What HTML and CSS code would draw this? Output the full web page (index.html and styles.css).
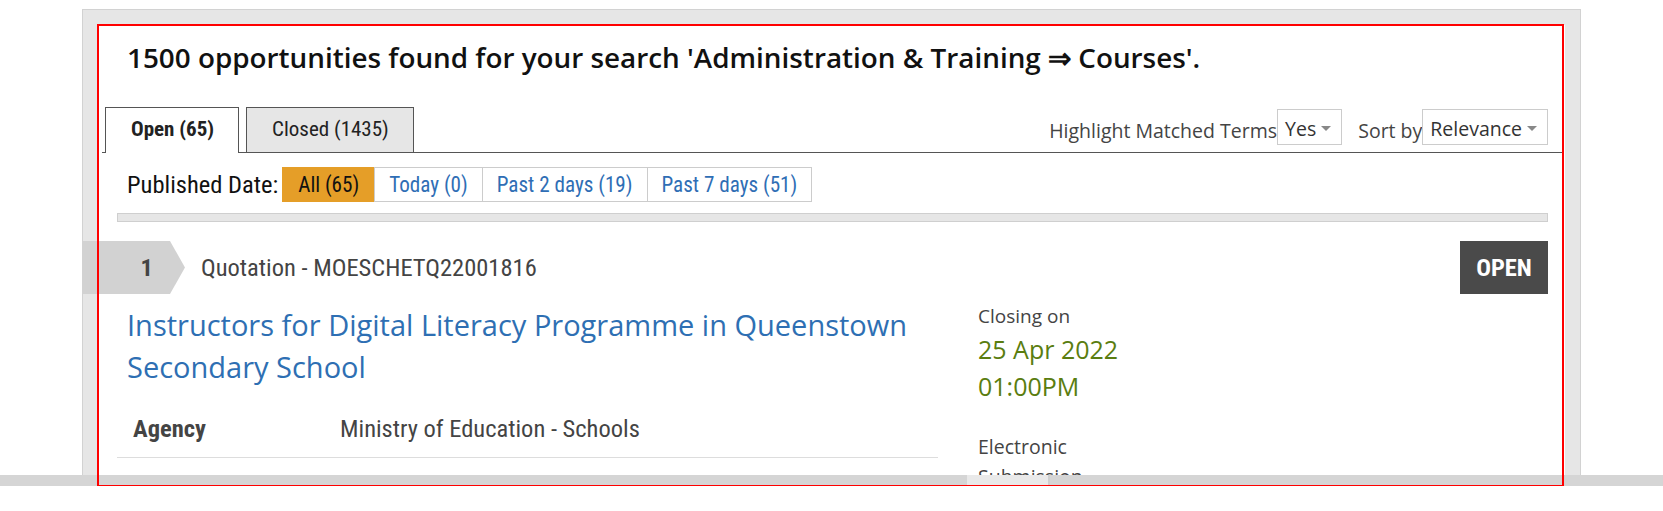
FILE: index.html
```html
<!DOCTYPE html>
<html lang="en">
<head>
<meta charset="utf-8">
<title>Opportunities</title>
<link rel="stylesheet" href="styles.css">
</head>
<body>
<div class="viewport">
  <div class="panel">
    <div class="results">
      <h1 class="summary">1500 opportunities found for your search 'Administration &amp; Training ⇒ Courses'.</h1>
      <div class="tabbar">
        <div class="tabs">
          <a class="tab active">Open (65)</a>
          <a class="tab">Closed (1435)</a>
        </div>
        <div class="controls">
          <span class="ctl-label">Highlight Matched Terms</span>
          <span class="select">Yes<i class="caret"></i></span>
          <span class="ctl-label sort">Sort by</span>
          <span class="select">Relevance<i class="caret"></i></span>
        </div>
      </div>
      <div class="inner">
        <div class="filters">
          <span class="filter-label">Published Date:</span>
          <span class="pill active">All (65)</span>
          <span class="pill">Today (0)</span>
          <span class="pill">Past 2 days (19)</span>
          <span class="pill">Past 7 days (51)</span>
        </div>
        <div class="divider"></div>
        <div class="item">
          <div class="item-head">
            <span class="num">1</span>
            <span class="ref">Quotation - MOESCHETQ22001816</span>
            <span class="status">OPEN</span>
          </div>
          <div class="item-body">
            <div class="main">
              <a class="title">Instructors for Digital Literacy Programme in Queenstown Secondary School</a>
              <table class="meta">
                <tr><th>Agency</th><td>Ministry of Education - Schools</td></tr>
              </table>
            </div>
            <div class="side">
              <div class="label">Closing on</div>
              <div class="date">25 Apr 2022</div>
              <div class="date">01:00PM</div>
              <div class="label gap">Electronic Submission</div>
            </div>
          </div>
        </div>
      </div>
    </div>
    <div class="highlight"></div>
  </div>
  <div class="hscroll"><div class="thumb"></div></div>
</div>
</body>
</html>
```
FILE: styles.css
```css
* { box-sizing: border-box; }
html, body { margin: 0; padding: 0; background: #fff; }
body { font-family: "Open Sans", "Noto Sans", sans-serif; color: #333; }

.viewport { position: relative; height: 486px; overflow: hidden; }

.panel {
  position: relative;
  width: 1499px;
  margin: 9px auto 0;
  border: 1px solid #d2d2d2;
  background: #e6e6e6;
  padding: 15px 15px 0;
  min-height: 600px;
}

.results { background: #fff; padding-top: 12px; min-height: 600px; }

.summary {
  margin: 0 0 0 29px;
  font-size: 27.85px;
  line-height: 40px;
  font-weight: 600;
  color: #111;
}

.tabbar {
  display: flex;
  justify-content: space-between;
  align-items: flex-start;
  margin: 28px 2px 0 4px;
  border-bottom: 1px solid #555;
  height: 48px;
}
.tabs { display: flex; gap: 7px; align-self: flex-end; margin-left: 3px; }
.tab {
  display: flex;
  align-items: center;
  height: 45px;
  padding: 0 24px 2px 25px;
  border: 1px solid #555;
  border-bottom: 0;
  background: #e6e6e6;
  font-family: "Roboto Condensed", "Liberation Sans Narrow", "DejaVu Sans Condensed", Roboto, sans-serif;
  font-size: 21px;
  color: #222;
  margin-bottom: -1px;
}
.tab.active { background: #fff; font-weight: 700; height: 46px; padding-bottom: 3px; }

.controls { display: flex; align-items: center; margin: 4px 15px 0 0; }
.ctl-label { font-size: 19.5px; color: #444; padding-top: 6px; }
.ctl-label.sort { margin-left: 16px; }
.select {
  display: flex;
  align-items: center;
  height: 36px;
  border: 1px solid #ccc;
  padding: 2px 10px 0 7px;
  font-size: 19.5px;
  color: #333;
}
.caret {
  display: inline-block;
  margin-left: 5px;
  border-left: 5px solid transparent;
  border-right: 5px solid transparent;
  border-top: 5px solid #888;
}

.inner { padding: 0 17px 0 19px; }

.filters {
  display: flex;
  align-items: center;
  margin-top: 14px;
  padding-left: 10px;
  font-family: "Roboto Condensed", "Liberation Sans Narrow", "DejaVu Sans Condensed", Roboto, sans-serif;
  font-size: 21.15px;
}
.filter-label { color: #111; margin-right: 5px; font-size: 24.5px; }
.pill {
  display: flex;
  align-items: center;
  height: 35px;
  padding: 0 14px;
  border: 1px solid #ccc;
  margin-left: -1px;
  color: #2f6eb5;
}
.pill.active { background: #e59e28; border-color: #e59e28; color: #111; padding: 0 15px; }

.divider {
  margin-top: 11px;
  height: 9px;
  border: 1px solid #cfcfcf;
  background: #e6e6e6;
}

.item-head {
  display: flex;
  align-items: center;
  margin-top: 19px;
  height: 53px;
  font-family: "Roboto Condensed", "Liberation Sans Narrow", "DejaVu Sans Condensed", Roboto, sans-serif;
}
.num {
  display: flex;
  align-items: center;
  justify-content: flex-end;
  width: 102px;
  height: 53px;
  margin-left: -34px;
  padding-right: 32px;
  background: #d2d2d2;
  clip-path: polygon(0 0, 87px 0, 102px 50%, 87px 100%, 0 100%);
  font-size: 24.5px;
  font-weight: 700;
  color: #444;
}
.ref { margin-left: 16px; font-size: 24.5px; color: #444; }
.status {
  margin-left: auto;
  display: flex;
  align-items: center;
  justify-content: center;
  width: 88px;
  height: 53px;
  background: #4a4a4a;
  color: #fff;
  font-size: 24.5px;
  font-weight: 700;
}

.item-body { display: grid; grid-template-columns: 821px 160px; column-gap: 40px; }
.main { padding-top: 10px; }
.title {
  display: block;
  padding-left: 10px;
  font-size: 29px;
  line-height: 42px;
  color: #2e6fb3;
}
.meta { width: 100%; border-collapse: collapse; margin-top: 13px; }
.meta th, .meta td {
  padding: 13px 16px 13px;
  line-height: 30px;
  text-align: left;
  vertical-align: top;
  border-bottom: 1px solid #ddd;
  font-family: "Roboto Condensed", "Liberation Sans Narrow", "DejaVu Sans Condensed", Roboto, sans-serif;
  font-size: 24.5px;
  color: #444;
}
.meta th { width: 207px; font-weight: 700; }
.meta td { font-weight: 400; }

.side { padding-top: 7px; }
.label { font-size: 19px; line-height: 30px; color: #444; }
.label.gap { margin-top: 27px; width: 130px; font-size: 19.5px; }
.date { font-size: 25px; line-height: 37px; color: #5a7d10; }

.hscroll {
  position: absolute;
  left: 0; right: 0; top: 475px;
  height: 11px;
  background: #d5d5d5;
  z-index: 1;
}
.thumb {
  position: absolute;
  left: 967px; top: 0;
  width: 83px; height: 11px;
  background: #e9e9e9;
  border-right: 2px solid #cfcfcf;
}

.highlight {
  position: absolute;
  left: 14px; top: 14px;
  width: 1467px; height: 462px;
  border: 2px solid #f00;
  border-bottom-width: 1px;
  z-index: 2;
  pointer-events: none;
}
```
